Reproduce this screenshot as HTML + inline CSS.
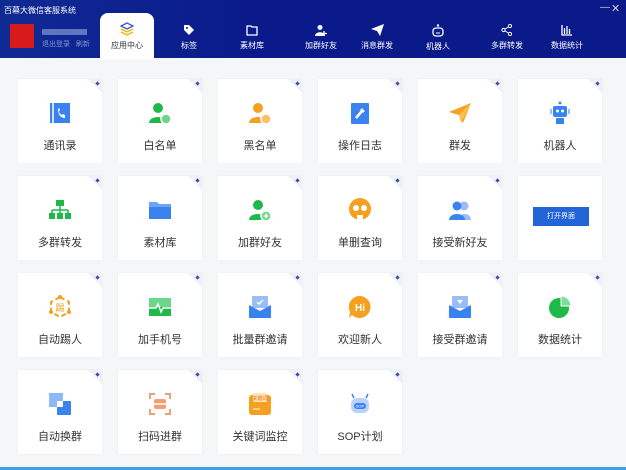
<!DOCTYPE html><html><head><meta charset="utf-8"><style>
*{margin:0;padding:0;box-sizing:border-box}
body{width:626px;height:470px;overflow:hidden;background:#f5f6f8;font-family:"Liberation Sans","Noto Sans CJK SC",sans-serif;position:relative}
.hd{position:absolute;left:0;top:0;width:626px;height:58px;background:linear-gradient(90deg,#102a94,#0a1a8a 40%,#0a1a88)}
.t{position:absolute;color:#fff;font-size:8px;text-align:center}
.tab{position:absolute;top:24px;width:60px;text-align:center;color:#fff;font-size:8px}
.tab svg{display:block;margin:0 auto 4px}
.act{position:absolute;left:100px;top:13px;width:54px;height:46px;background:#fff;border-radius:8px 8px 0 0}
.c{position:absolute;width:84px;height:84px;background:#fff;box-shadow:0 0 2px rgba(0,0,0,.06)}
.c .ic{position:absolute;left:30px;top:22px;width:24px;height:24px}
.c .l{position:absolute;left:0;width:84px;top:58px;text-align:center;font-size:11px;color:#333}
.pin{position:absolute;right:0;top:0;width:0;height:0;border-top:14px solid #eef0f8;border-left:14px solid transparent}
.pin:after{content:"";position:absolute;right:3px;top:-11px;width:3px;height:3px;background:#3a4ab0;transform:rotate(45deg)}
</style></head><body>
<div class="hd"></div>
<div class="t" style="left:4px;top:5px;font-size:8px">百幕大微信客服系统</div>
<div class="t" style="left:600px;top:2px;font-size:10px;color:#ccd">—</div>
<div class="t" style="left:611px;top:2px;font-size:11px;color:#ccd">✕</div>
<div style="position:absolute;left:10px;top:24px;width:24px;height:24px;background:#d71a1a"></div>
<div style="position:absolute;left:42px;top:29px;width:45px;height:6px;background:#7f95d6;opacity:.7"></div>
<div class="t" style="left:42px;top:39px;color:#7f95d6;font-size:7px">退出登录&nbsp;&nbsp;&nbsp;刷新</div>
<div class="act"></div>
<div class="tab" style="left:97px;top:22px;color:#334"><svg width="14" height="14" viewBox="0 0 14 14"><path d="M7 1L13 4L7 7L1 4Z" fill="none" stroke="#3c5bd6" stroke-width="1.4"/><path d="M1 7L7 10L13 7M1 10L7 13L13 10" fill="none" stroke="#f0b400" stroke-width="1.4"/></svg>应用中心</div>
<div class="tab" style="left:159px"><svg width="12" height="12" viewBox="0 0 12 12"><path d="M1 1H6L11 6L6 11L1 6Z" fill="#fff"/><circle cx="4" cy="4" r="1" fill="#0a1a88"/></svg>标签</div>
<div class="tab" style="left:222px"><svg width="12" height="12" viewBox="0 0 12 12"><path d="M1 2H5L6 3H11V11H1Z" fill="none" stroke="#fff" stroke-width="1.3"/></svg>素材库</div>
<div class="tab" style="left:291px"><svg width="12" height="12" viewBox="0 0 12 12"><circle cx="5" cy="3.5" r="2.5" fill="#fff"/><path d="M0 12C0 7 10 7 10 12Z" fill="#fff"/><path d="M9 7V12M7 9.5H12" stroke="#fff" stroke-width="1.3"/></svg>加群好友</div>
<div class="tab" style="left:347px"><svg width="13" height="12" viewBox="0 0 13 12"><path d="M0 5L13 0L9 12L6 7Z" fill="#fff"/></svg>消息群发</div>
<div class="tab" style="left:408px"><svg width="14" height="13" viewBox="0 0 14 13"><circle cx="7" cy="1.5" r="1.2" fill="#fff"/><rect x="2" y="4" width="10" height="8" rx="3" fill="none" stroke="#fff" stroke-width="1.3"/><path d="M5 9H9" stroke="#fff"/></svg>机器人</div>
<div class="tab" style="left:477px"><svg width="12" height="12" viewBox="0 0 12 12"><circle cx="9" cy="2" r="1.6" fill="none" stroke="#fff"/><circle cx="2.5" cy="6" r="1.6" fill="none" stroke="#fff"/><circle cx="9" cy="10" r="1.6" fill="none" stroke="#fff"/><path d="M4 5L7.5 3M4 7L7.5 9" stroke="#fff"/></svg>多群转发</div>
<div class="tab" style="left:537px"><svg width="12" height="12" viewBox="0 0 12 12"><path d="M1 1V11H11M3.5 4V10M6 2V10M8.5 5V10" stroke="#fff" stroke-width="1.3" fill="none"/></svg>数据统计</div>
<div style="position:absolute;left:0;top:467px;width:626px;height:3px;background:#3da3e6"></div>

<div class="c" style="left:18px;top:79px"><div class="pin"></div><svg class="ic" viewBox="0 0 24 24"><rect x="2" y="2" width="20" height="20" fill="#3a82f0"/><path d="M5 2V22" stroke="#fff" stroke-width="1.5"/><path d="M10 8C10 14 13 17 17 17L17 14L15 13L14 14C12 13 11 12 11 10L12 9L11 7Z" fill="#fff"/></svg><div class="l">通讯录</div></div>
<div class="c" style="left:118px;top:79px"><div class="pin"></div><svg class="ic" viewBox="0 0 24 24"><circle cx="10" cy="7" r="5" fill="#1fb84a"/><path d="M1 22C1 14 19 14 19 22Z" fill="#1fb84a"/><circle cx="18" cy="18" r="5" fill="#6dd68a" stroke="#fff" stroke-width="1.5"/></svg><div class="l">白名单</div></div>
<div class="c" style="left:218px;top:79px"><div class="pin"></div><svg class="ic" viewBox="0 0 24 24"><circle cx="10" cy="7" r="5" fill="#f5a020"/><path d="M1 22C1 14 19 14 19 22Z" fill="#f5a020"/><circle cx="18" cy="18" r="5" fill="#f8c060" stroke="#fff" stroke-width="1.5"/></svg><div class="l">黑名单</div></div>
<div class="c" style="left:318px;top:79px"><div class="pin"></div><svg class="ic" viewBox="0 0 24 24"><rect x="3" y="2" width="18" height="21" rx="1" fill="#3a82f0"/><path d="M8 17L14 10M13 8L16 11" stroke="#fff" stroke-width="2.5"/></svg><div class="l">操作日志</div></div>
<div class="c" style="left:418px;top:79px"><div class="pin"></div><svg class="ic" viewBox="0 0 24 24"><path d="M1 11L23 2L15 22L11 14Z" fill="#f5a020"/><path d="M11 14L23 2L13 22Z" fill="#f9c050"/></svg><div class="l">群发</div></div>
<div class="c" style="left:518px;top:79px"><div class="pin"></div><svg class="ic" viewBox="0 0 24 24"><circle cx="12" cy="2" r="1.5" fill="#3a82f0"/><rect x="5" y="5" width="14" height="11" rx="2" fill="#3a82f0"/><circle cx="9.5" cy="10" r="1.5" fill="#fff"/><circle cx="14.5" cy="10" r="1.5" fill="#fff"/><rect x="8" y="17" width="8" height="6" fill="#3a82f0"/><path d="M3 8V13M21 8V13" stroke="#9bbcf5" stroke-width="2"/></svg><div class="l">机器人</div></div>

<div class="c" style="left:18px;top:176px"><div class="pin"></div><svg class="ic" viewBox="0 0 24 24"><rect x="8" y="2" width="8" height="6" fill="#1fb84a"/><path d="M12 8V12M4 12H20M4 12V15M12 12V15M20 12V15" stroke="#1fb84a" stroke-width="1.5" fill="none"/><rect x="1" y="15" width="6" height="6" fill="#1fb84a"/><rect x="9" y="15" width="6" height="6" fill="#1fb84a"/><rect x="17" y="15" width="6" height="6" fill="#1fb84a"/></svg><div class="l">多群转发</div></div>
<div class="c" style="left:118px;top:176px"><div class="pin"></div><svg class="ic" viewBox="0 0 24 24"><path d="M1 4H9L11 6H23V21H1Z" fill="#6aa6f5"/><path d="M1 9H23V21H1Z" fill="#3a82f0"/></svg><div class="l">素材库</div></div>
<div class="c" style="left:218px;top:176px"><div class="pin"></div><svg class="ic" viewBox="0 0 24 24"><circle cx="10" cy="7" r="5" fill="#1fb84a"/><path d="M1 22C1 14 19 14 19 22Z" fill="#1fb84a"/><circle cx="18" cy="18" r="5" fill="#6dd68a" stroke="#fff" stroke-width="1.5"/><path d="M18 15.5V20.5M15.5 18H20.5" stroke="#fff" stroke-width="1.3"/></svg><div class="l">加群好友</div></div>
<div class="c" style="left:318px;top:176px"><div class="pin"></div><svg class="ic" viewBox="0 0 24 24"><circle cx="12" cy="11" r="11" fill="#f5a020"/><circle cx="8" cy="10" r="3" fill="#fff"/><circle cx="16" cy="10" r="3" fill="#fff"/><rect x="9" y="17" width="6" height="5" fill="#fff"/></svg><div class="l">单删查询</div></div>
<div class="c" style="left:418px;top:176px"><div class="pin"></div><svg class="ic" viewBox="0 0 24 24"><circle cx="16" cy="8" r="4.5" fill="#9bbcf5"/><path d="M10 22C10 14 23 14 23 22Z" fill="#9bbcf5"/><circle cx="9" cy="8" r="4.5" fill="#3a82f0"/><path d="M1 22C1 14 17 14 17 22Z" fill="#3a82f0"/></svg><div class="l">接受新好友</div></div>
<div class="c" style="left:518px;top:176px"><div style="position:absolute;left:15px;top:31px;width:56px;height:19px;background:#2364d8;color:#fff;font-size:7px;text-align:center;line-height:19px">打开界面</div></div>

<div class="c" style="left:18px;top:273px"><div class="pin"></div><svg class="ic" viewBox="0 0 24 24"><path d="M12 2L21 7V17L12 22L3 17V7Z" fill="none" stroke="#f5a020" stroke-width="2" stroke-dasharray="5 3"/><circle cx="12" cy="2" r="2" fill="#f5a020"/><circle cx="3" cy="17" r="2" fill="#f5a020"/><circle cx="21" cy="17" r="2" fill="#f5a020"/><text x="12" y="16" font-size="9" text-anchor="middle" fill="#f5a020" font-family="Noto Sans CJK SC">踢</text></svg><div class="l">自动踢人</div></div>
<div class="c" style="left:118px;top:273px"><div class="pin"></div><svg class="ic" viewBox="0 0 24 24"><rect x="1" y="3" width="22" height="9" fill="#6dd68a"/><rect x="1" y="12" width="22" height="9" fill="#1fb84a"/><path d="M1 13H8L10 9L13 17L15 13H23" stroke="#fff" stroke-width="1.5" fill="none"/></svg><div class="l">加手机号</div></div>
<div class="c" style="left:218px;top:273px"><div class="pin"></div><svg class="ic" viewBox="0 0 24 24"><rect x="4" y="1" width="16" height="12" fill="#9bbcf5"/><path d="M9 7L11 9L15 5" stroke="#fff" stroke-width="1.5" fill="none"/><path d="M1 10L12 16L23 10V23H1Z" fill="#3a82f0"/></svg><div class="l">批量群邀请</div></div>
<div class="c" style="left:318px;top:273px"><div class="pin"></div><svg class="ic" viewBox="0 0 24 24"><path d="M12 1A11 11 0 1 1 4 20L1 23L2 17A11 11 0 0 1 12 1Z" fill="#f5a020"/><text x="12" y="16" font-size="10" font-weight="bold" text-anchor="middle" fill="#fff" font-family="Liberation Sans">Hi</text></svg><div class="l">欢迎新人</div></div>
<div class="c" style="left:418px;top:273px"><div class="pin"></div><svg class="ic" viewBox="0 0 24 24"><rect x="4" y="1" width="16" height="12" fill="#9bbcf5"/><path d="M9 5H15L12 9Z" fill="#fff"/><path d="M1 10L12 16L23 10V23H1Z" fill="#3a82f0"/></svg><div class="l">接受群邀请</div></div>
<div class="c" style="left:518px;top:273px"><div class="pin"></div><svg class="ic" viewBox="0 0 24 24"><circle cx="11" cy="13" r="10" fill="#1fb84a"/><path d="M13 1A10 10 0 0 1 23 11H13Z" fill="#7fde9a" stroke="#fff"/></svg><div class="l">数据统计</div></div>

<div class="c" style="left:18px;top:370px"><div class="pin"></div><svg class="ic" viewBox="0 0 24 24"><rect x="1" y="1" width="14" height="14" fill="#8fb8f8"/><rect x="9" y="9" width="14" height="14" fill="#3a82f0"/><rect x="9" y="9" width="6" height="6" fill="#fff"/></svg><div class="l">自动换群</div></div>
<div class="c" style="left:118px;top:370px"><div class="pin"></div><svg class="ic" viewBox="0 0 24 24"><path d="M2 7V2H7M17 2H22V7M22 17V22H17M7 22H2V17" stroke="#f0a070" stroke-width="2" fill="none"/><rect x="6" y="7" width="12" height="10" rx="2" fill="#f0a070"/><path d="M5 12H19" stroke="#fff" stroke-width="1.5"/></svg><div class="l">扫码进群</div></div>
<div class="c" style="left:218px;top:370px"><div class="pin"></div><svg class="ic" viewBox="0 0 24 24"><rect x="1" y="3" width="22" height="20" rx="3" fill="#f5a020"/><rect x="5" y="1" width="14" height="9" fill="#ffe3b0"/><text x="12" y="8" font-size="5" text-anchor="middle" fill="#e07020" font-family="Noto Sans CJK SC">关键词</text><path d="M5 17H12" stroke="#ffe3b0" stroke-width="1.5"/></svg><div class="l">关键词监控</div></div>
<div class="c" style="left:318px;top:370px"><div class="pin"></div><svg class="ic" viewBox="0 0 24 24"><path d="M6 6L4 2M18 6L20 2" stroke="#3a82f0" stroke-width="1.5"/><rect x="3" y="6" width="18" height="15" rx="6" fill="#b8d3fa"/><rect x="6" y="11" width="12" height="6" rx="3" fill="#3a82f0"/><text x="12" y="15.5" font-size="4" text-anchor="middle" fill="#fff" font-family="Liberation Sans">SOP</text></svg><div class="l">SOP计划</div></div>
</body></html>
